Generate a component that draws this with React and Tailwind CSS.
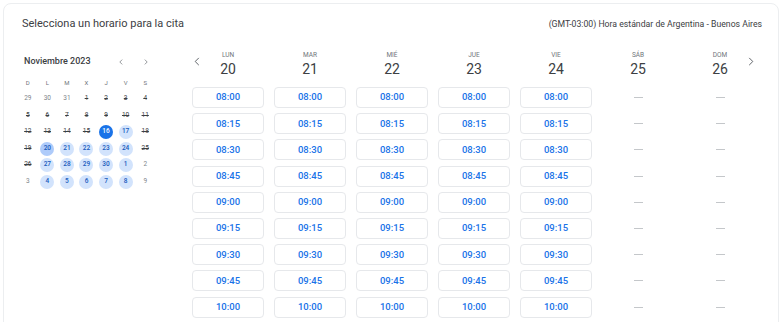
import React from 'react';

const font = { fontFamily: 'Roboto, "Liberation Sans", sans-serif' };

const miniRows = [
  [['29', 'o'], ['30', 'o'], ['31', 'o'], ['1', 's'], ['2', 's'], ['3', 's'], ['4', 's']],
  [['5', 's'], ['6', 's'], ['7', 's'], ['8', 's'], ['9', 's'], ['10', 's'], ['11', 's']],
  [['12', 's'], ['13', 's'], ['14', 's'], ['15', 's'], ['16', 'sel'], ['17', 'a'], ['18', 's']],
  [['19', 's'], ['20', 'cur'], ['21', 'a'], ['22', 'a'], ['23', 'a'], ['24', 'a'], ['25', 's']],
  [['26', 's'], ['27', 'a'], ['28', 'a'], ['29', 'a'], ['30', 'a'], ['1', 'a'], ['2', 'o']],
  [['3', 'o'], ['4', 'a'], ['5', 'a'], ['6', 'a'], ['7', 'a'], ['8', 'a'], ['9', 'o']],
];

const days = [
  { label: 'LUN', num: '20', open: true },
  { label: 'MAR', num: '21', open: true },
  { label: 'MIÉ', num: '22', open: true },
  { label: 'JUE', num: '23', open: true },
  { label: 'VIE', num: '24', open: true },
  { label: 'SÁB', num: '25', open: false },
  { label: 'DOM', num: '26', open: false },
];

const times = ['08:00', '08:15', '08:30', '08:45', '09:00', '09:15', '09:30', '09:45', '10:00'];

const Chevron = ({ dir = 'left', w = 6, h = 9 }) => (
  <svg width={w} height={h} viewBox="0 0 6 10" fill="none">
    {dir === 'left' ? (
      <polyline points="5,1 1,5 5,9" stroke="#5f6368" strokeWidth="1.1" />
    ) : (
      <polyline points="1,1 5,5 1,9" stroke="#5f6368" strokeWidth="1.1" />
    )}
  </svg>
);

const MiniDay = ({ n, t }) => {
  if (t === 'sel')
    return (
      <span className="w-[14px] h-[14px] rounded-full bg-[#1a73e8] text-white flex items-center justify-center font-medium">
        {n}
      </span>
    );
  if (t === 'a' || t === 'cur')
    return (
      <span
        className={`w-[14px] h-[14px] rounded-full flex items-center justify-center text-[#185abc] font-medium ${
          t === 'cur' ? 'bg-[#aecbfa]' : 'bg-[#d2e3fc]'
        }`}
      >
        {n}
      </span>
    );
  if (t === 's') return <span className="text-[#3c4043] line-through">{n}</span>;
  return <span className="text-[#80868b]">{n}</span>;
};

const MiniCalendar = () => (
  <div className="w-[137px] shrink-0">
    <div className="h-[24px] flex items-center">
      <span className="pl-[6px] text-[9px] font-medium text-[#3c4043]">Noviembre 2023</span>
      <div className="ml-auto flex items-center gap-[21px] pr-[7px]">
        <Chevron dir="left" w={4} h={6} />
        <Chevron dir="right" w={4} h={6} />
      </div>
    </div>
    <div className="grid grid-cols-7 text-[6px] text-[#70757a]">
      {['D', 'L', 'M', 'X', 'J', 'V', 'S'].map((d) => (
        <div key={d} className="h-[16.6px] flex items-center justify-center">
          {d}
        </div>
      ))}
    </div>
    {miniRows.map((row, i) => (
      <div key={i} className="grid grid-cols-7 text-[6.5px]">
        {row.map(([n, t], j) => (
          <div key={j} className="h-[16.6px] flex items-center justify-center">
            <MiniDay n={n} t={t} />
          </div>
        ))}
      </div>
    ))}
  </div>
);

const WeekGrid = () => (
  <div className="w-[574px] shrink-0">
    <div className="relative grid grid-cols-7">
      {days.map((d) => (
        <div key={d.num} className="flex flex-col items-center">
          <span className="h-[10px] leading-[10px] text-[6.5px] text-[#70757a]">{d.label}</span>
          <span className="h-[18px] leading-[18px] text-[14px] text-[#3c4043]">{d.num}</span>
        </div>
      ))}
      <div className="absolute left-[7px] top-[7px]">
        <Chevron dir="left" />
      </div>
      <div className="absolute left-[561px] top-[7px]">
        <Chevron dir="right" />
      </div>
    </div>
    <div className="grid grid-cols-7 mt-[9px]">
      {days.map((d) => (
        <div key={d.num} className="flex flex-col items-center gap-[5.2px]">
          {times.map((t) =>
            d.open ? (
              <button
                key={t}
                className="w-[72px] h-[21px] rounded-[4px] border border-[#e6e8eb] bg-white text-[9.5px] font-medium text-[#1a73e8] flex items-center justify-center"
              >
                {t}
              </button>
            ) : (
              <div key={t} className="h-[21px] flex items-center justify-center">
                <span className="block w-[9px] h-px bg-[#c4c7ca]" />
              </div>
            )
          )}
        </div>
      ))}
    </div>
  </div>
);

export default function App() {
  return (
    <div className="w-[783px] h-[322px] overflow-hidden bg-white pt-[3px] pl-[3px]" style={font}>
      <div className="w-[776px] h-[340px] border border-[#eceef0] rounded-lg">
        <div className="flex items-center justify-between pt-[13px] pl-[18px] pr-[16px]">
          <h1 className="text-[11px] leading-[14px] text-[#3c4043]">Selecciona un horario para la cita</h1>
          <span className="text-[8.7px] leading-[14px] text-[#3c4043]">
            (GMT-03:00) Hora estándar de Argentina - Buenos Aires
          </span>
        </div>
        <div className="flex mt-[19px] pl-[14px]">
          <MiniCalendar />
          <div className="w-[32px] shrink-0" />
          <WeekGrid />
        </div>
      </div>
    </div>
  );
}
